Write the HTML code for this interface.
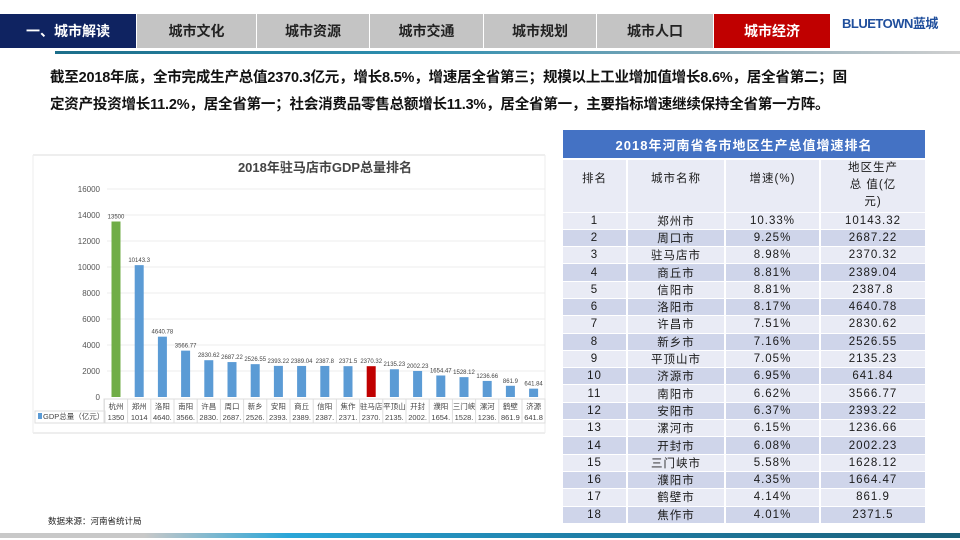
<!DOCTYPE html>
<html><head><meta charset="utf-8"><style>
*{margin:0;padding:0;box-sizing:border-box}
body{width:960px;height:540px;background:#fff;position:relative;overflow:hidden;font-family:"Liberation Sans","Noto Sans CJK SC",sans-serif}
.tab{position:absolute;top:14px;height:34px;background:#c4c4c4;color:#222;font-weight:bold;font-size:14px;display:flex;align-items:center;justify-content:center;border-right:1px solid #fff}
.p{position:absolute;left:50px;width:880px;font-size:14.5px;font-weight:bold;color:#111;letter-spacing:-0.2px}
table{border-collapse:collapse;position:absolute;left:563px;top:130px;width:362px;font-size:11.5px;color:#1a1a1a}
td{text-align:center;border-right:2px solid #fff;border-bottom:1px solid #fff;height:17.3px;letter-spacing:1px;padding:0}
td:last-child{border-right:none}
tr.o td{background:#e9ebf5}tr.e td{background:#cfd5ea}
</style></head><body>
<div class="tab" style="left:0;width:137px;background:#0f2361;color:#fff">一、城市解读</div>
<div class="tab" style="left:137px;width:120px">城市文化</div>
<div class="tab" style="left:257px;width:113px">城市资源</div>
<div class="tab" style="left:370px;width:114px">城市交通</div>
<div class="tab" style="left:484px;width:113px">城市规划</div>
<div class="tab" style="left:597px;width:117px">城市人口</div>
<div class="tab" style="left:714px;width:116px;background:#c00000;color:#fff;border:none">城市经济</div>
<div style="position:absolute;left:842px;top:13px;font-size:13px;font-weight:bold;color:#1f4e9c;letter-spacing:-0.5px">BLUETOWN蓝城</div>
<div style="position:absolute;left:55px;top:51px;width:905px;height:3px;background:linear-gradient(90deg,#1c6e8a,#2e8fb0 40%,#8aaab8 75%,#d0d0d0)"></div>
<div class="p" style="top:66px">截至2018年底，全市完成生产总值2370.3亿元，增长8.5%，增速居全省第三；规模以上工业增加值增长8.6%，居全省第二；固</div>
<div class="p" style="top:93px">定资产投资增长11.2%，居全省第一；社会消费品零售总额增长11.3%，居全省第一，主要指标增速继续保持全省第一方阵。</div>

<svg style="position:absolute;left:0;top:0" width="560" height="440" font-family="Liberation Sans,Noto Sans CJK SC,sans-serif">
<line x1="33" x2="545" y1="155" y2="155" stroke="#ddd"/><line x1="33" x2="545" y1="433" y2="433" stroke="#ddd"/>
<line x1="33" x2="33" y1="155" y2="433" stroke="#eee"/><line x1="545" x2="545" y1="155" y2="433" stroke="#eee"/>
<text x="325" y="172" font-size="13" font-weight="bold" fill="#444" text-anchor="middle">2018年驻马店市GDP总量排名</text>
<g font-size="8" fill="#555" text-anchor="end">
<text x="100" y="192">16000</text><text x="100" y="218">14000</text><text x="100" y="244">12000</text><text x="100" y="270">10000</text><text x="100" y="296">8000</text><text x="100" y="322">6000</text><text x="100" y="348">4000</text><text x="100" y="374">2000</text><text x="100" y="400">0</text></g>
<g stroke="#ececec"><line x1="107" x2="545" y1="189" y2="189"/><line x1="107" x2="545" y1="215" y2="215"/><line x1="107" x2="545" y1="241" y2="241"/><line x1="107" x2="545" y1="267" y2="267"/><line x1="107" x2="545" y1="293" y2="293"/><line x1="107" x2="545" y1="319" y2="319"/><line x1="107" x2="545" y1="345" y2="345"/><line x1="107" x2="545" y1="371" y2="371"/></g>
<g id="bars"></g>
<rect x="104" y="399" width="441" height="24" fill="none" stroke="#ddd"/>
<rect x="35" y="411" width="70" height="12" fill="none" stroke="#ddd"/>
<rect x="38" y="413" width="4" height="6" fill="#5b9bd5"/>
<text x="43" y="419" font-size="7.5" fill="#444">GDP总量（亿元）</text>
<g id="lab" font-size="7.5" fill="#444" text-anchor="middle"></g>
</svg>
<script>
var n=["杭州","郑州","洛阳","南阳","许昌","周口","新乡","安阳","商丘","信阳","焦作","驻马店","平顶山","开封","濮阳","三门峡","漯河","鹤壁","济源"];
var v=[13500,10143.3,4640.78,3566.77,2830.62,2687.22,2526.55,2393.22,2389.04,2387.8,2371.5,2370.32,2135.23,2002.23,1654.47,1528.12,1236.66,861.9,641.84];
var t=["1350","1014","4640.","3566.","2830.","2687.","2526.","2393.","2389.","2387.","2371.","2370.","2135.","2002.","1654.","1528.","1236.","861.9","641.8"];
var b="",l="";
for(var i=0;i<19;i++){var c=116+23.2*i,h=v[i]*0.013,col=i==0?"#70ad47":(i==11?"#c00000":"#5b9bd5");
b+='<rect x="'+(c-4.5)+'" y="'+(397-h)+'" width="9" height="'+h+'" fill="'+col+'"/>';
b+='<text x="'+c+'" y="'+(394-h)+'" font-size="6" fill="#444" text-anchor="middle">'+v[i]+'</text>';
l+='<text x="'+c+'" y="409">'+n[i]+'</text><text x="'+c+'" y="420">'+t[i]+'</text><line x1="'+(c-11.6)+'" x2="'+(c-11.6)+'" y1="399" y2="423" stroke="#ddd"/>';}
document.getElementById("bars").innerHTML=b;document.getElementById("lab").innerHTML=l;
</script>

<div style="position:absolute;left:563px;top:130px;width:362px;height:28px;background:#4472c4;color:#fff;font-weight:bold;font-size:13px;display:flex;align-items:center;justify-content:center;letter-spacing:1px">2018年河南省各市地区生产总值增速排名</div>
<table style="top:160px">
<colgroup><col style="width:64px"><col style="width:98px"><col style="width:95px"><col style="width:105px"></colgroup>
<tr class="o"><td style="height:52px;vertical-align:top;padding-top:10px">排名</td><td style="vertical-align:top;padding-top:10px">城市名称</td><td style="vertical-align:top;padding-top:10px">增速(%)</td><td style="line-height:17px">地区生产<br>总 值(亿<br>元)</td></tr>
<tbody id="tb"></tbody></table>
<script>
var r=[["郑州市","10.33%","10143.32"],["周口市","9.25%","2687.22"],["驻马店市","8.98%","2370.32"],["商丘市","8.81%","2389.04"],["信阳市","8.81%","2387.8"],["洛阳市","8.17%","4640.78"],["许昌市","7.51%","2830.62"],["新乡市","7.16%","2526.55"],["平顶山市","7.05%","2135.23"],["济源市","6.95%","641.84"],["南阳市","6.62%","3566.77"],["安阳市","6.37%","2393.22"],["漯河市","6.15%","1236.66"],["开封市","6.08%","2002.23"],["三门峡市","5.58%","1628.12"],["濮阳市","4.35%","1664.47"],["鹤壁市","4.14%","861.9"],["焦作市","4.01%","2371.5"]];
var s="";for(var i=0;i<18;i++){s+='<tr class="'+(i%2?"e":"o")+'"><td>'+(i+1)+'</td><td>'+r[i][0]+'</td><td>'+r[i][1]+'</td><td>'+r[i][2]+'</td></tr>';}
document.getElementById("tb").innerHTML=s;
</script>
<div style="position:absolute;left:48px;top:515px;font-size:8.5px;color:#222">数据来源：河南省统计局</div>
<div style="position:absolute;left:0;top:533px;width:960px;height:5px;background:linear-gradient(90deg,#c8c8c8,#c8c8c8 15%,#2aa6d8 30%,#1f7fa8 60%,#1b5f78)"></div>
</body></html>
